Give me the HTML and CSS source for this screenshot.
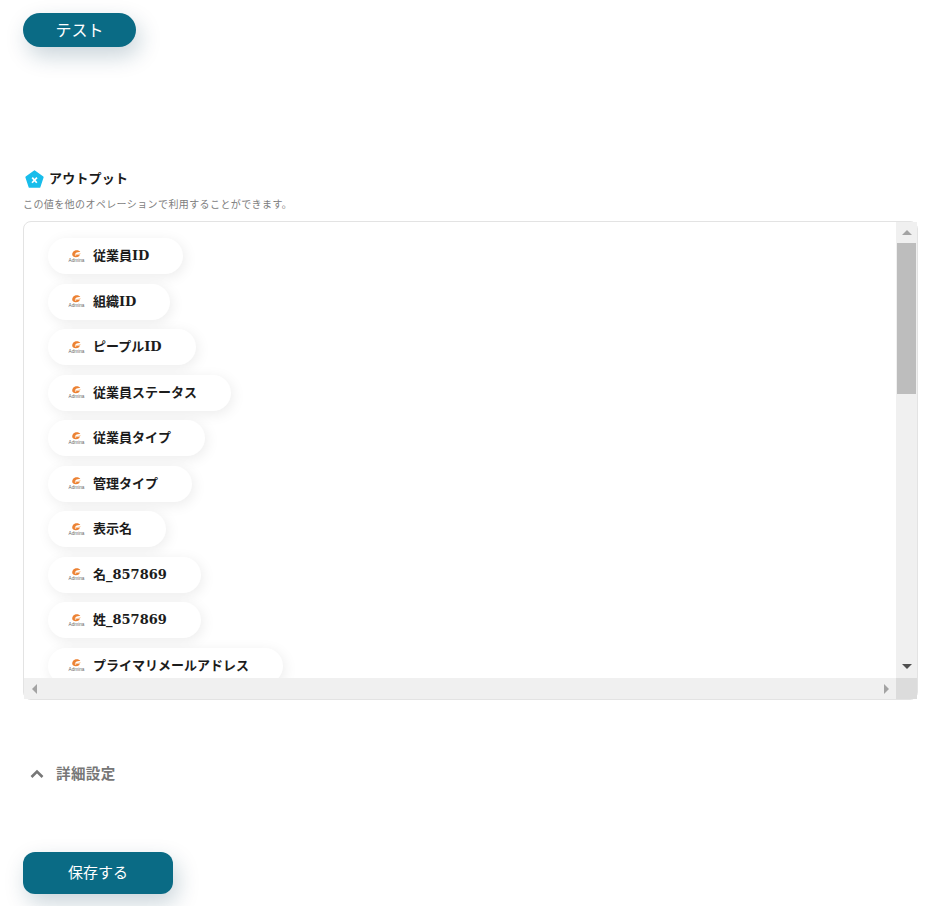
FILE: index.html
```html
<!DOCTYPE html>
<html lang="ja">
<head>
    <meta charset="UTF-8">
    <title>アウトプット</title>
    <link rel="stylesheet" href="styles.css">
</head>
<body>
    <svg class="defs" width="0" height="0">
        <symbol id="logo-mark" viewBox="4 0 13 10">
            <path d="M15 3.2C13.6.6 8.4.2 6.2 3.4 5 5.2 5.2 7.4 6.6 8.6 8.4 10 11.6 9.8 13.6 8.2L14.6 6.2 9.8 7 9.4 8C9 7.6 8.6 6.8 8.8 5.8 9.4 3.4 12.6 2.8 15 3.2Z" fill="#ec8234"/>
            <path d="M8 6.4 15.6 4.6 14.8 5.8 8 7.2Z" fill="#f7b27a"/>
        </symbol>
    </svg>

    <button class="btn-test" type="button">テスト</button>

    <div class="output-head">
        <svg class="output-icon" viewBox="0 0 20 20">
            <path d="M10 1.2 18.8 7.6 15.4 17.8 4.6 17.8 1.2 7.6Z" fill="#18bdeb" stroke="#18bdeb" stroke-width="1.6" stroke-linejoin="round"/>
            <path d="M7.6 8 12.4 13.4M12.6 8 7.4 13.4" stroke="#fff" stroke-width="1.8"/>
        </svg>
        <h2>アウトプット</h2>
    </div>
    <p class="output-note">この値を他のオペレーションで利用することができます。</p>

    <div class="output-box">
        <div class="pill-list">
            <div class="pill"><div class="logo"><svg><use href="#logo-mark"/></svg><small>Admina</small></div><span>従業員ID</span></div>
            <div class="pill"><div class="logo"><svg><use href="#logo-mark"/></svg><small>Admina</small></div><span>組織ID</span></div>
            <div class="pill"><div class="logo"><svg><use href="#logo-mark"/></svg><small>Admina</small></div><span>ピープルID</span></div>
            <div class="pill"><div class="logo"><svg><use href="#logo-mark"/></svg><small>Admina</small></div><span>従業員ステータス</span></div>
            <div class="pill"><div class="logo"><svg><use href="#logo-mark"/></svg><small>Admina</small></div><span>従業員タイプ</span></div>
            <div class="pill"><div class="logo"><svg><use href="#logo-mark"/></svg><small>Admina</small></div><span>管理タイプ</span></div>
            <div class="pill"><div class="logo"><svg><use href="#logo-mark"/></svg><small>Admina</small></div><span>表示名</span></div>
            <div class="pill"><div class="logo"><svg><use href="#logo-mark"/></svg><small>Admina</small></div><span>名_857869</span></div>
            <div class="pill"><div class="logo"><svg><use href="#logo-mark"/></svg><small>Admina</small></div><span>姓_857869</span></div>
            <div class="pill"><div class="logo"><svg><use href="#logo-mark"/></svg><small>Admina</small></div><span>プライマリメールアドレス</span></div>
        </div>

        <!-- スクロールバー -->
        <div class="bar-v">
            <span class="arrow arrow-up"></span>
            <div class="bar-track"><div class="bar-thumb"></div></div>
            <span class="arrow arrow-down"></span>
        </div>
        <div class="bar-h">
            <span class="arrow arrow-left"></span>
            <span class="arrow arrow-right"></span>
        </div>
        <div class="bar-corner"></div>
    </div>

    <div class="advanced">
        <svg class="chevron" viewBox="0 0 14 10">
            <path d="M1.5 8 7 2.5 12.5 8" fill="none" stroke="#777" stroke-width="2.6"/>
        </svg>
        <span>詳細設定</span>
    </div>

    <button class="btn-save" type="button">保存する</button>
</body>
</html>
```
FILE: styles.css
```css
* {
    margin: 0;
    padding: 0;
    box-sizing: border-box;
}

html, body {
    height: 906px;
    overflow: hidden;
}

body {
    font-family: "Noto Sans CJK JP", "Noto Sans", sans-serif;
    background-color: #fff;
    color: #1c1c1c;
    padding: 13px 14px 0 23px;
}

.defs {
    position: absolute;
}

button {
    display: block;
    font-family: inherit;
    color: #fff;
    background-color: #0a6b85;
    border: none;
    cursor: pointer;
}

.btn-test {
    width: 113px;
    height: 34px;
    padding-bottom: 2px;
    border-radius: 17px;
    font-size: 16px;
    font-weight: 400;
    box-shadow: 4px 9px 22px rgba(10, 60, 85, 0.22);
}

/* アウトプット */
.output-head {
    display: flex;
    align-items: center;
    gap: 5px;
    margin-top: 121px;
    padding-left: 2px;
    height: 22px;
}

.output-icon {
    width: 19px;
    height: 19px;
}

.output-head h2 {
    font-size: 13px;
    font-weight: 700;
    line-height: 20px;
    padding-bottom: 3px;
    letter-spacing: 0.2px;
}

.output-note {
    font-size: 10px;
    line-height: 14px;
    letter-spacing: 0.4px;
    margin-top: 7px;
    color: #7d7d7d;
}

.output-box {
    display: grid;
    grid-template-columns: 1fr 21px;
    grid-template-rows: 1fr 21px;
    width: 895px;
    height: 479px;
    margin-top: 10px;
    border: 1px solid #e3e3e3;
    border-radius: 8px;
}

.pill-list {
    display: flex;
    flex-direction: column;
    align-items: flex-start;
    gap: 9.5px;
    padding: 16px 0 0 24px;
    overflow: hidden;
}

.pill {
    display: flex;
    align-items: center;
    flex-shrink: 0;
    height: 36px;
    padding: 0 34px 0 20px;
    border-radius: 18px;
    background: #fff;
    font-family: "DejaVu Serif", "Noto Sans CJK JP", serif;
    font-size: 13px;
    font-weight: 700;
    box-shadow: 2px 3px 14px rgba(0, 0, 0, 0.08);
}

.pill span {
    padding-bottom: 3px;
}

.logo {
    display: flex;
    flex-direction: column;
    align-items: center;
    width: 17px;
    margin-right: 8px;
}

.logo svg {
    width: 11px;
    height: 9px;
}

.logo small {
    font-family: "Liberation Sans", sans-serif;
    font-size: 4.7px;
    font-weight: 400;
    line-height: 6px;
    color: #666;
}

/* スクロールバー */
.bar-v {
    display: flex;
    flex-direction: column;
    align-items: center;
    background: #f0f0f0;
    padding: 8px 0 9px;
}

.bar-track {
    flex: 1;
    width: 100%;
    padding: 8px 1px 0;
}

.bar-thumb {
    height: 151px;
    background: #bdbdbd;
}

.bar-h {
    display: flex;
    align-items: center;
    justify-content: space-between;
    background: #f0f0f0;
    padding: 0 7px 0 8px;
}

.bar-corner {
    background: #dcdcdc;
}

.arrow {
    width: 0;
    height: 0;
    border-style: solid;
    border-color: transparent;
    flex-shrink: 0;
}

.arrow-up {
    border-width: 0 5px 5px;
    border-bottom-color: #a3a3a3;
}

.arrow-down {
    border-width: 5px 5px 0;
    border-top-color: #505050;
}

.arrow-left {
    border-width: 5px 5px 5px 0;
    border-right-color: #a3a3a3;
}

.arrow-right {
    border-width: 5px 0 5px 5px;
    border-left-color: #a3a3a3;
}

/* 詳細設定 */
.advanced {
    display: flex;
    align-items: center;
    gap: 12px;
    margin-top: 63px;
    padding-left: 7px;
    height: 22px;
    font-size: 14.5px;
    letter-spacing: 0.4px;
    font-weight: 700;
    color: #777;
}

.advanced span {
    padding-bottom: 3px;
}

.chevron {
    width: 14px;
    height: 10px;
}

.btn-save {
    width: 150px;
    height: 42px;
    padding-bottom: 3px;
    margin-top: 67px;
    border-radius: 12px;
    font-size: 15px;
    font-weight: 400;
    box-shadow: 4px 9px 22px rgba(10, 60, 85, 0.22);
}
```
